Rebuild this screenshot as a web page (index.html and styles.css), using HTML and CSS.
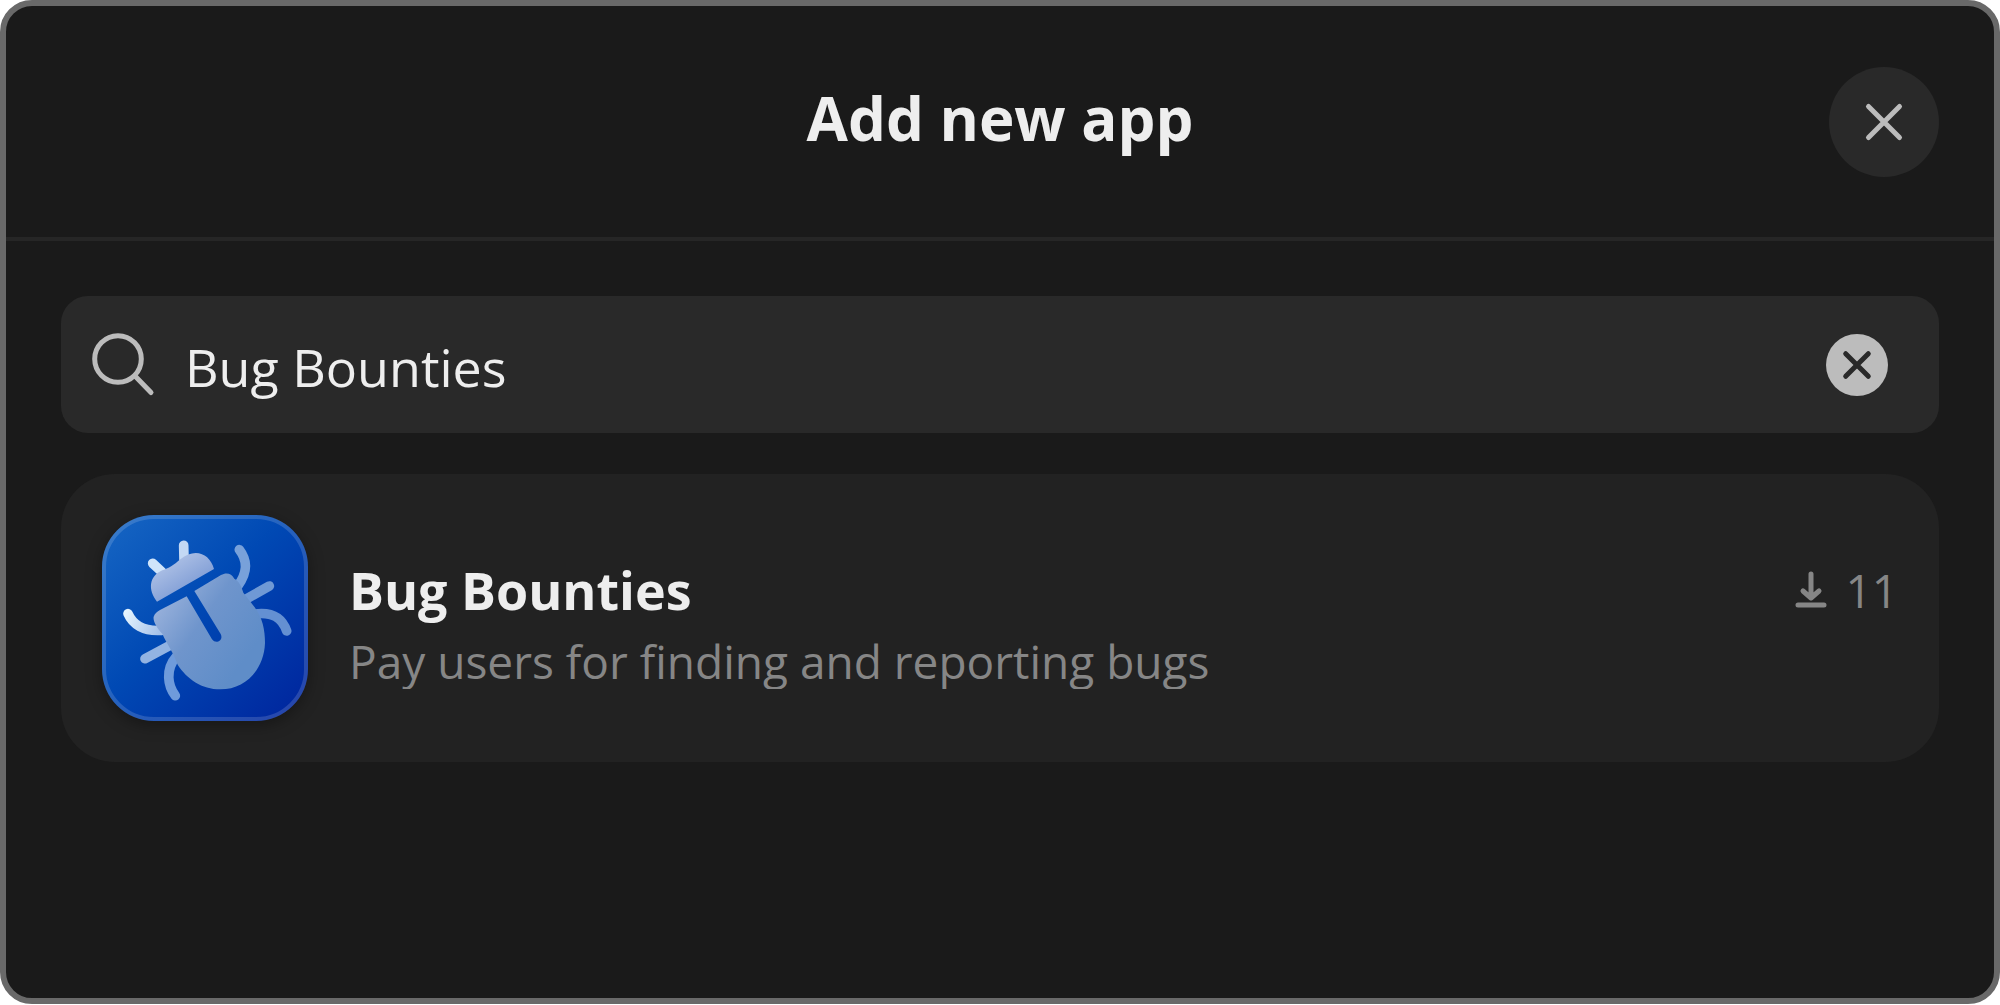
FILE: index.html
```
<!DOCTYPE html>
<html lang="en">
<head>
    <meta charset="UTF-8">
    <title>Add new app</title>
    <link rel="stylesheet" href="styles.css">
</head>
<body>

<main class="modal">
    <header class="modal-header">
        <h1>Add new app</h1>
        <button class="close-button" type="button" aria-label="Close">
            <svg viewBox="0 0 110 110"><path d="M39.5 39.5L70.5 70.5M70.5 39.5L39.5 70.5"/></svg>
        </button>
    </header>

    <div class="modal-body">
        <form class="search-form">
            <label for="query" aria-label="Search apps">
                <svg class="search-icon" viewBox="0 0 64 64"><circle cx="27" cy="26" r="23.3"/><path d="M44 43L60 59.5"/></svg>
            </label>
            <input type="text" id="query" name="query" value="Bug Bounties">
            <button class="clear-button" type="button" aria-label="Clear">
                <svg viewBox="0 0 62 62"><path d="M19.7 19.7L42.3 42.3M42.3 19.7L19.7 42.3"/></svg>
            </button>
        </form>

        <article class="app-card">
            <div class="app-icon">
                <svg viewBox="66 74 618 618">
                    <defs>
                        <linearGradient id="shell" gradientUnits="userSpaceOnUse" x1="220" y1="300" x2="500" y2="500">
                            <stop offset="0" stop-color="#a3b8df"/>
                            <stop offset="0.5" stop-color="#6f95cc"/>
                            <stop offset="1" stop-color="#5f8dc8"/>
                        </linearGradient>
                        <linearGradient id="head" gradientUnits="userSpaceOnUse" x1="270" y1="220" x2="320" y2="300">
                            <stop offset="0" stop-color="#a9bde4"/>
                            <stop offset="1" stop-color="#829fd6"/>
                        </linearGradient>
                        <linearGradient id="leftLeg" gradientUnits="userSpaceOnUse" x1="135" y1="370" x2="270" y2="440">
                            <stop offset="0" stop-color="#e4f4ff"/>
                            <stop offset="1" stop-color="#94b3e2"/>
                        </linearGradient>
                    </defs>
                    <!-- legs -->
                    <g class="legs">
                        <path stroke="url(#leftLeg)" d="M144 370C158 402 190 424 245 420"/>
                        <path stroke="#92b3e2" d="M195 505L272 464"/>
                        <path stroke="#6f9bdb" d="M286 616C264 588 254 538 290 498"/>
                        <path stroke="#78a1da" d="M478 178C506 215 500 250 474 286"/>
                        <path stroke="#6f99d5" d="M568 287L495 328"/>
                        <path stroke="#6490d2" d="M524 371C578 364 606 382 620 422"/>
                        <path stroke="#cfe4fa" d="M218 219L246 245"/>
                        <path stroke="#c3d8f4" d="M311 165L312 208"/>
                    </g>
                    <!-- head -->
                    <path fill="url(#head)" d="M231 334C203 299 207 257 247 240C266 234 281 225 301 207C345 170 390 190 402 236Z"/>
                    <!-- body with the slit between the wings -->
                    <path fill="url(#shell)" d="M320 318L396 447C407 463 432 451 422 431L343 302L423 254C439 245 455 249 463 265C476 272 484 286 490 307L521 347C548 379 555 420 555 458C552 538 496 597 421 597C365 597 321 566 293 523C281 487 261 462 247 430C232 415 218 392 221 379C224 369 232 364 240 359Z"/>
                </svg>
            </div>
            <h2>Bug Bounties</h2>
            <p class="downloads">
                <svg viewBox="0 0 32 38"><path d="M16 3V26M8 20L16 27L24 20M3 34H29"/></svg>
                <span>11</span>
            </p>
            <p class="description">Pay users for finding and reporting bugs</p>
        </article>
    </div>
</main>

</body>
</html>
```

FILE: styles.css
```
* {
    box-sizing: border-box;
}
body {
    margin: 0;
    padding-bottom: 1px;
    background-color: #fff;
    font-family: "Segoe UI", "Open Sans", "Noto Sans", sans-serif;
    color: #eee;
}
h1, h2, p {
    margin: 0;
}
button {
    padding: 0;
    border: none;
    border-radius: 50%;
    cursor: pointer;
}
svg {
    display: block;
    fill: none;
    stroke-linecap: round;
    stroke-linejoin: round;
}
.modal {
    min-height: calc(100vh - 1px);
    border: 6px solid #696969;
    border-radius: 32px;
    background-color: #1a1a1a;
}
.modal-header {
    display: grid;
    grid-template-columns: 110px 1fr 110px;
    padding: 61px 55px 60px;
    border-bottom: 4px solid #262626;
}
.modal-header h1 {
    grid-column: 2;
    font-size: 60px;
    line-height: 102px;
    font-weight: 700;
    text-align: center;
}
.close-button {
    width: 110px;
    height: 110px;
    background-color: #292929;
}
.close-button svg {
    stroke: #bcbcbc;
    stroke-width: 5;
}
.modal-body {
    display: flex;
    flex-direction: column;
    gap: 41px;
    padding: 55px;
}
.search-form {
    display: flex;
    align-items: center;
    gap: 30px;
    height: 137px;
    padding: 0 51px 0 30px;
    border-radius: 27px;
    background-color: #292929;
}
.search-icon {
    width: 64px;
    height: 64px;
    stroke: #bcbcbc;
    stroke-width: 5;
}
.search-form input {
    flex: 1;
    min-width: 0;
    padding: 4px 0 0;
    border: none;
    outline: none;
    background: none;
    color: #eee;
    font-family: inherit;
    font-size: 52px;
}
.clear-button {
    width: 62px;
    height: 62px;
    background-color: #bcbcbc;
}
.clear-button svg {
    stroke: #292929;
    stroke-width: 5;
}
.app-card {
    display: grid;
    grid-template-columns: 206px 1fr auto;
    column-gap: 41px;
    padding: 41px;
    border-radius: 54px;
    background-color: #222;
}
.app-icon {
    position: relative;
    grid-row: 1 / 3;
    height: 206px;
    border-radius: 52px;
    background: linear-gradient(135deg, #1767c4 0%, #0049b4 45%, #00239c 100%);
    box-shadow: 0 4px 16px rgba(0, 0, 0, 0.35);
}
.app-icon::after {
    content: "";
    position: absolute;
    inset: 0;
    border: 4px solid rgba(255, 255, 255, 0.15);
    border-radius: 52px;
}
.legs {
    stroke-width: 29;
}
.app-card h2 {
    align-self: end;
    font-size: 52px;
    line-height: 86px;
    font-weight: 700;
}
.downloads {
    display: flex;
    align-self: end;
    align-items: center;
    gap: 18px;
    color: #868686;
    font-size: 46px;
    line-height: 86px;
}
.downloads svg {
    width: 32px;
    height: 38px;
    stroke: #868686;
    stroke-width: 5;
}
.description {
    grid-column: 2 / 4;
    height: 56px;
    overflow: hidden;
    color: #868686;
    font-size: 46px;
    line-height: 56px;
}
```
